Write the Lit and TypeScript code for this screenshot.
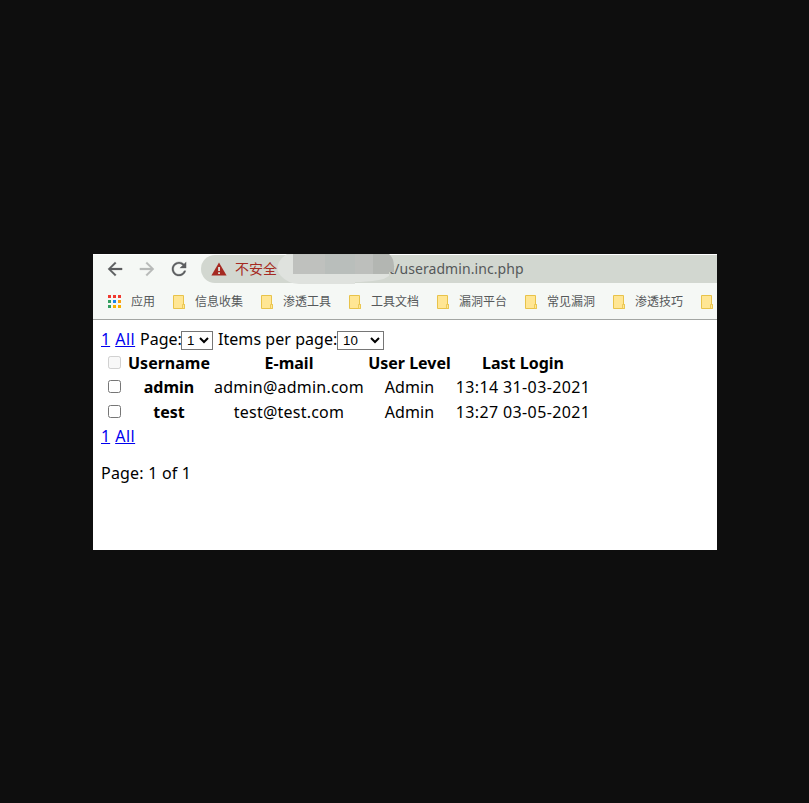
import { LitElement, html, css, svg } from "lit";
import { customElement } from "lit/decorators.js";

const folders = ["信息收集", "渗透工具", "工具文档", "漏洞平台", "常见漏洞", "渗透技巧", ""];

const dots = [
  "#f0392f", "#f0392f", "#f0392f",
  "#34a060", "#1a84f0", "#f9a010",
  "#34a060", "#f9b000", "#f9b000",
];

const users = [
  { name: "admin", mail: "admin@admin.com", level: "Admin", login: "13:14 31-03-2021" },
  { name: "test", mail: "test@test.com", level: "Admin", login: "13:27 03-05-2021" },
];

@customElement("browser-toolbar")
class BrowserToolbar extends LitElement {
  static styles = css`
    :host {
      display: block;
      height: 29px;
      padding-top: 1px;
      background: linear-gradient(#fff 1px, #f5f8f5 1px);
    }
    .row { display: flex; height: 28px; }
    .nav { display: flex; align-items: center; width: 108px; padding-left: 14px; box-sizing: border-box; gap: 16px; flex: none; }
    .nav svg { display: block; fill: #5c5e60; stroke: #5c5e60; stroke-width: 0.3; }
    .nav .off { fill: #b7b9b8; stroke: #b7b9b8; }
    .omnibox {
      position: relative;
      flex: 1;
      display: flex;
      align-items: center;
      border-radius: 14px 0 0 14px;
      background: #d2d7d0;
      font-family: "Noto Sans", "Noto Sans CJK SC", sans-serif;
      font-size: 14px;
      line-height: 28px;
      white-space: pre;
    }
    .warn { margin-left: 10px; display: block; }
    .unsafe { margin-left: 8px; width: 42px; padding-bottom: 2px; line-height: 26px; color: #a52a22; font-family: "Noto Sans CJK SC", sans-serif; }
    .url { margin-left: 112px; color: #55585a; letter-spacing: 0.08px; }
    .smudge { position: absolute; left: 74px; top: -1px; display: block; }
  `;
  render() {
    return html`<div class="row">
      <div class="nav">
        <svg width="16" height="16" viewBox="3 3 18 18">
          <path d="M20 11H7.83l5.59-5.59L12 4l-8 8 8 8 1.41-1.41L7.83 13H20v-2z" />
        </svg>
        <svg class="off" width="16" height="16" viewBox="3 3 18 18">
          <path d="M12 4l-1.41 1.41L16.17 11H4v2h12.17l-5.58 5.59L12 20l8-8z" />
        </svg>
        <svg width="16" height="16" viewBox="3 3 18 18">
          <path d="M17.65 6.35C16.2 4.9 14.21 4 12 4c-4.42 0-7.99 3.58-7.99 8s3.57 8 7.99 8c3.73 0 6.84-2.55 7.73-6h-2.08c-.82 2.33-3.04 4-5.65 4-3.31 0-6-2.69-6-6s2.69-6 6-6c1.66 0 3.14.69 4.22 1.78L13 11h7V4l-2.35 2.35z" />
        </svg>
      </div>
      <div class="omnibox">
        <svg class="warn" width="16" height="14" viewBox="0 0 16 14">
          <path d="M8 0.5L15.6 13.5H0.4z" fill="#a52a22" />
          <path d="M7.1 5h1.9v4H7.1zM7.1 10.2h1.9v1.8H7.1z" fill="#d9dcd6" />
        </svg>
        <span class="unsafe">不安全</span>
        <span class="url">t/useradmin.inc.php</span>
        <svg class="smudge" width="122" height="30" viewBox="0 0 122 30">
          <path d="M12 0H112Q119 3 119 12L118 18H114V22Q110 25 104 26Q90 28 80 28V30H24Q12 29 6 22Q0 16 4 8Q7 3 12 0z" fill="#dfe2de" />
          <path d="M18 0H50V20H18z" fill="#bfc1be" />
          <path d="M50 0H80V20H50z" fill="#b9bebb" />
          <path d="M80 0H98V20H80z" fill="#bdbfbc" />
          <path d="M98 0H114Q119 4 119 12V18H114V20H98z" fill="#b3b6b2" />
        </svg>
      </div>
    </div>`;
  }
}

@customElement("bookmarks-bar")
class BookmarksBar extends LitElement {
  static styles = css`
    :host {
      display: flex;
      height: 36px;
      box-sizing: border-box;
      border-bottom: 1px solid #a3a6a3;
      background: #f5f8f5;
      overflow: hidden;
      font-family: "Noto Sans CJK SC", sans-serif;
      font-size: 12px;
      line-height: 33px;
      color: #55585a;
      white-space: nowrap;
    }
    .apps { display: flex; align-items: center; width: 80px; padding-left: 15px; box-sizing: border-box; gap: 10px; flex: none; }
    .item { display: flex; align-items: center; width: 88px; gap: 9px; flex: none; }
    span { padding-bottom: 2px; }
    svg { display: block; flex: none; }
    .item svg { margin-top: 1px; }
  `;
  render() {
    return html`
      <div class="apps">
        <svg width="13" height="13" viewBox="0 0 13 13" shape-rendering="crispEdges">
          ${dots.map((c, i) => svg`<rect x=${(i % 3) * 5} y=${Math.floor(i / 3) * 5} width="3" height="3" fill=${c} />`)}
        </svg>
        <span>应用</span>
      </div>
      ${folders.map(
        (name) => html`<div class="item">
          <svg width="13" height="14" viewBox="0 0 13 14">
            <path d="M.5 .5h10v9h1v4H.5z" fill="#ffe694" stroke="#e8c34a" />
            <path d="M9.5 13.5v-4h2v4z" fill="#ffe694" stroke="#e8c34a" stroke-width=".8" />
          </svg>
          <span>${name}</span>
        </div>`
      )}
    `;
  }
}

@customElement("user-admin")
class UserAdmin extends LitElement {
  static styles = css`
    :host {
      display: block;
      padding: 7px 8px 8px;
      font-family: "Noto Sans", sans-serif;
      font-size: 16px;
      line-height: 24px;
      color: #000;
      white-space: nowrap;
    }
    a { color: #0000ee; text-decoration: underline; }
    .filters { display: flex; height: 24px; }
    .links { display: flex; gap: 5px; }
    .links a + a { letter-spacing: 0.5px; }
    .filters .links { width: 39px; }
    .page { width: 41px; }
    .items { width: 119px; margin-left: 5px; letter-spacing: 0.05px; }
    select {
      height: 19px;
      margin: 4px 0 0;
      padding: 0 0 0 1px;
      border: 1px solid #767676;
      border-radius: 0;
      background: #fff;
      color: #000;
      font: 13.33px "Liberation Sans", sans-serif;
    }
    .s1 { width: 32px; }
    .s2 { width: 47px; }
    .grid {
      display: grid;
      grid-template-columns: 13px 82px 150px 82px 135px;
      column-gap: 5px;
      padding-left: 7px;
      grid-template-rows: 24px 24px 25px;
      justify-items: center;
      align-items: center;
    }
    .head, .name { font-weight: 700; padding-left: 2px; margin-right: -2px; }
    .head + .head { margin-right: 0; }
    .head + .head + .head { padding-left: 1px; }
    .mail { padding-left: 2px; letter-spacing: 0.22px; }
    .level { padding-left: 1px; letter-spacing: 0.1px; }
    .login { padding-left: 1px; letter-spacing: 0.38px; }
    input { width: 13px; height: 13px; margin: 0 0 2px; display: block; }
    input:last-of-type { margin-bottom: 1px; }
    .summary { margin-top: 13px; letter-spacing: 0.2px; }
  `;
  render() {
    const links = html`<div class="links"><a href="#">1</a><a href="#">All</a></div>`;
    return html`
      <div class="filters">
        ${links}
        <span class="page">Page:</span>
        <select class="s1"><option>1</option></select>
        <span class="items">Items per page:</span>
        <select class="s2"><option>10</option></select>
      </div>
      <div class="grid">
        <input type="checkbox" disabled />
        <span class="head">Username</span>
        <span class="head">E-mail</span>
        <span class="head">User Level</span>
        <span class="head">Last Login</span>
        ${users.map(
          (u) => html`<input type="checkbox" />
            <span class="name">${u.name}</span>
            <span class="mail">${u.mail}</span>
            <span class="level">${u.level}</span>
            <span class="login">${u.login}</span>`
        )}
      </div>
      ${links}
      <div class="summary">Page: 1 of 1</div>
    `;
  }
}

@customElement("app-root")
class AppRoot extends LitElement {
  static styles = css`
    :host {
      display: grid;
      grid-template: 296px / 624px;
      padding: 254px 0 0 93px;
      box-sizing: border-box;
      height: 803px;
      background: #0e0e0e;
      overflow: hidden;
    }
    .window { background: #fff; overflow: hidden; }
  `;
  render() {
    return html`<main class="window">
      <browser-toolbar></browser-toolbar>
      <bookmarks-bar></bookmarks-bar>
      <user-admin></user-admin>
    </main>`;
  }
}
